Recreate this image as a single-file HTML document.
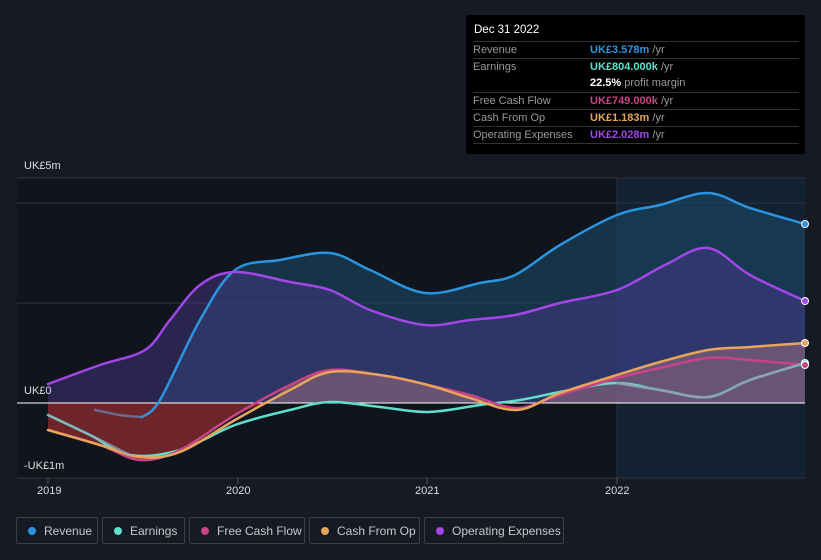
<!DOCTYPE html>
<html><head><meta charset="utf-8"><style>
body{margin:0;width:821px;height:560px;background:#151a24;font-family:"Liberation Sans",sans-serif;position:relative;overflow:hidden}
.tt{position:absolute;left:466px;top:15px;width:339px;height:139px;background:#000;border-radius:2px;font-size:11px;color:#999}
.tt .h{position:absolute;left:8px;top:9px;color:#fff;font-size:11.5px}
.row{position:absolute;left:7px;width:326px;border-top:1px solid #333;height:17px}
.row span{position:absolute;top:2px}
.row .v{left:117px}
.leg{position:absolute;top:517px;height:27px;border:1px solid #3a3f4a;border-radius:2px;color:#c8c8c8;font-size:12px;line-height:27px;box-sizing:border-box}
.leg i{position:absolute;left:11px;top:9px;width:8px;height:8px;border-radius:50%}
.leg b{font-weight:normal;position:absolute;left:27px}
.ax{position:absolute;color:#ddd;font-size:11px}
</style></head><body>
<svg id="sv" width="821" height="560" style="position:absolute;left:0;top:0">
<rect x="17" y="178" width="600" height="300" fill="#10141c"/>
<rect x="617" y="178" width="188" height="300" fill="#132233"/>
<line x1="617" y1="178" x2="617" y2="478" stroke="#2a3040"/>
<g stroke="#2e3440" stroke-width="1"><line x1="17" y1="178" x2="805" y2="178"/><line x1="17" y1="203" x2="805" y2="203"/><line x1="17" y1="303" x2="805" y2="303"/><line x1="17" y1="478" x2="805" y2="478"/></g>
<polyline class="s" data-close="805,403" points="160,403 200,320 235,270 280,260 330,253 370,270 425,293 480,283 515,275 560,245 617,215 660,205 708,193 750,208 805,224" fill="#1b4766" opacity="0.6"/>
<polyline class="s" data-close="805,403 48,403" points="48,384 100,365 145,350 170,320 200,285 235,272 290,282 330,290 370,310 425,325 470,320 515,315 560,303 617,290 665,265 708,248 750,275 805,301" fill="#4b3a8f" opacity="0.45"/>
<polyline class="s" data-close="270,403 48,403" points="48,430 100,445 140,460 180,450 235,415 270,403" fill="#8e2b2f" opacity="0.75"/>
<polyline class="s" data-close="805,403 480,403" points="480,403 540,403 560,395 617,375 660,362 708,350 750,347 805,343" fill="#a27080" opacity="0.5"/>
<polyline class="s" data-close="270,403" points="270,403 290,385 330,370 380,375 428,385 480,403" fill="#a27080" opacity="0.5"/>
<line x1="17" y1="403" x2="805" y2="403" stroke="#fff" stroke-width="1"/>
<g fill="none" stroke-width="2.5" stroke-linejoin="round" stroke-linecap="round">
<polyline class="s" points="95,410 120,415 142,417" stroke="#6a6a90"/>
<polyline class="s" points="142,417 160,400 200,320 235,270 280,260 330,253 370,270 425,293 480,283 515,275 560,245 617,215 660,205 708,193 750,208 805,224" stroke="#2b94e0"/>
<polyline class="s" points="48,384 100,365 145,350 170,320 200,285 235,272 290,282 330,290 370,310 425,325 470,320 515,315 560,303 617,290 665,265 708,248 750,275 805,301" stroke="#a346e8"/>
<polyline class="s" points="48,415 90,435 130,455 180,450 235,425 290,410 330,402 380,407 428,412 480,405 520,400 570,390 617,383 660,390 708,397 750,380 805,363" stroke="#5fe0cc"/>
<polyline class="s" points="48,430 100,445 140,460 180,450 235,415 290,385 330,370 380,375 428,385 470,395 517,408 560,395 617,378 660,368 708,358 750,360 805,365" stroke="#c84486"/>
<polyline class="s" points="48,430 100,445 140,457 180,452 235,420 290,390 330,372 380,375 428,385 470,398 517,410 560,393 617,375 660,362 708,350 750,347 805,343" stroke="#e8a55a"/>
<polyline class="s" points="48,415 90,435 130,455" stroke="#8ab" opacity="0.7"/>
<polyline class="s" points="617,383 660,390 708,397 750,380 805,363" stroke="#8aa4b0"/>
</g>
<circle cx="805" cy="224" r="3.5" fill="#2b94e0" stroke="#fff"/><circle cx="805" cy="301" r="3.5" fill="#a346e8" stroke="#fff"/>
<circle cx="805" cy="343" r="3.5" fill="#e8a55a" stroke="#fff"/><circle cx="805" cy="363" r="3.5" fill="#5fe0cc" stroke="#fff"/><circle cx="805" cy="365" r="3.5" fill="#c84486" stroke="#fff"/>
<g stroke="#555"><line x1="48" y1="478" x2="48" y2="484"/><line x1="238" y1="478" x2="238" y2="484"/><line x1="427" y1="478" x2="427" y2="484"/><line x1="617" y1="478" x2="617" y2="484"/></g>
</svg>
<script>
document.querySelectorAll('polyline.s').forEach(function(pl){
 var p=pl.getAttribute('points').trim().split(/\s+/).map(function(s){return s.split(',').map(Number)});
 var d='M'+p[0][0]+','+p[0][1];
 for(var i=0;i<p.length-1;i++){
  var p0=p[i-1]||p[i],p1=p[i],p2=p[i+1],p3=p[i+2]||p2;
  var c1=[p1[0]+(p2[0]-p0[0])/6,p1[1]+(p2[1]-p0[1])/6],c2=[p2[0]-(p3[0]-p1[0])/6,p2[1]-(p3[1]-p1[1])/6];
  d+=' C'+c1+' '+c2+' '+p2;
 }
 var cl=pl.getAttribute('data-close');
 if(cl){cl.split(/\s+/).forEach(function(q){d+=' L'+q});d+=' Z';}
 var path=document.createElementNS('http://www.w3.org/2000/svg','path');
 for(var k=0;k<pl.attributes.length;k++){var a=pl.attributes[k];if(a.name!='points'&&a.name!='class'&&a.name!='data-close')path.setAttribute(a.name,a.value);}
 path.setAttribute('d',d);pl.parentNode.replaceChild(path,pl);
});
</script>
<div class="ax" style="left:24px;top:160px">UK£5m</div>
<div class="ax" style="left:24px;top:385px">UK£0</div>
<div class="ax" style="left:24px;top:460px">-UK£1m</div>
<div class="ax" style="left:37px;top:485px">2019</div>
<div class="ax" style="left:226px;top:485px">2020</div>
<div class="ax" style="left:415px;top:485px">2021</div>
<div class="ax" style="left:605px;top:485px">2022</div>
<div class="tt"><div class="h">Dec 31 2022</div>
<div class="row" style="top:26px"><span>Revenue</span><span class="v"><b style="color:#2b94e0">UK£3.578m</b> /yr</span></div>
<div class="row" style="top:43px"><span>Earnings</span><span class="v"><b style="color:#5fe0cc">UK£804.000k</b> /yr</span></div>
<div class="row" style="top:60px;border-top:none"><span class="v"><b style="color:#fff">22.5%</b> profit margin</span></div>
<div class="row" style="top:77px"><span>Free Cash Flow</span><span class="v"><b style="color:#c84486">UK£749.000k</b> /yr</span></div>
<div class="row" style="top:94px"><span>Cash From Op</span><span class="v"><b style="color:#e8a55a">UK£1.183m</b> /yr</span></div>
<div class="row" style="top:111px"><span>Operating Expenses</span><span class="v"><b style="color:#a346e8">UK£2.028m</b> /yr</span></div>
<div class="row" style="top:128px;height:0"></div>
</div>
<div class="leg" style="left:16px;width:82px"><i style="background:#2b94e0"></i><b>Revenue</b></div>
<div class="leg" style="left:102px;width:83px"><i style="background:#5fe0cc"></i><b>Earnings</b></div>
<div class="leg" style="left:189px;width:116px"><i style="background:#c84486"></i><b>Free Cash Flow</b></div>
<div class="leg" style="left:309px;width:111px"><i style="background:#e8a55a"></i><b>Cash From Op</b></div>
<div class="leg" style="left:424px;width:140px"><i style="background:#a346e8"></i><b>Operating Expenses</b></div>
</body></html>
